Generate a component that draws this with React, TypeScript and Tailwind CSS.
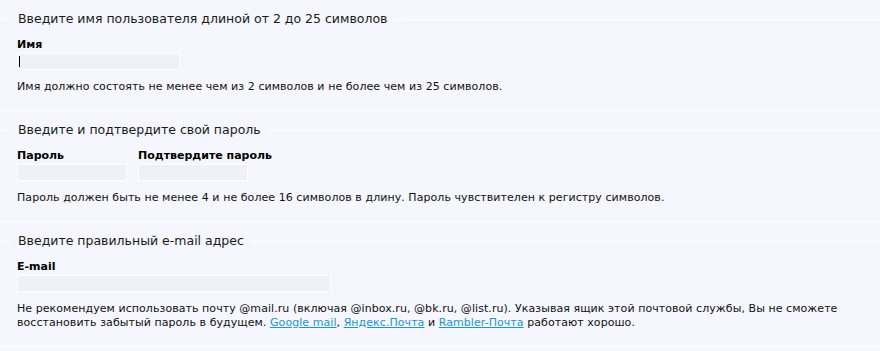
import type { ReactNode } from 'react';

function Section({ legend, children }: { legend: string; children: ReactNode }) {
  return (
    <fieldset className="border-y border-x-0 border-white px-[17px] pb-[16px]">
      <legend className="-ml-[5px] px-[6px] text-[12.5px] leading-[16px] text-[#1a1a1a]">{legend}</legend>
      <div className="pt-[11px]">{children}</div>
    </fieldset>
  );
}

function Field({ label, width, focus }: { label: string; width: string; focus?: boolean }) {
  return (
    <div className="flex flex-col">
      <label className="text-[11px] leading-[14px] font-bold text-black">{label}</label>
      <div className="relative mt-px">
        <input
          autoFocus={focus}
          className={`block h-[17px] ${width} border border-white bg-[#f0f0f8] px-px text-[11px] caret-black outline-none`}
          type="text"
        />
        {/* caret shown in the screenshot */}
        {focus && <span className="pointer-events-none absolute left-[2px] top-[3px] h-[11px] w-px bg-black" />}
      </div>
    </div>
  );
}

function Help({ children }: { children: ReactNode }) {
  return <p className="mt-[10px] text-[11px] leading-[14px] tracking-[0.06px] text-[#111]">{children}</p>;
}

export default function App() {
  return (
    <div
      className="min-h-screen bg-[#f5f6fe] pt-[11px]"
      style={{ fontFamily: '"DejaVu Sans", Verdana, sans-serif' }}
    >
      <Section legend="Введите имя пользователя длиной от 2 до 25 символов">
        <Field label="Имя" width="w-[163px]" focus />
        <Help>Имя должно состоять не менее чем из 2 символов и не более чем из 25 символов.</Help>
      </Section>

      <div className="h-[11px]" />

      <Section legend="Введите и подтвердите свой пароль">
        <div className="flex gap-[11px]">
          <Field label="Пароль" width="w-[110px]" />
          <Field label="Подтвердите пароль" width="w-[110px]" />
        </div>
        <Help>Пароль должен быть не менее 4 и не более 16 символов в длину. Пароль чувствителен к регистру символов.</Help>
      </Section>

      <div className="h-[11px]" />

      <Section legend="Введите правильный e-mail адрес">
        <Field label="E-mail" width="w-[314px]" />
        <Help>
          Не рекомендуем использовать почту @mail.ru (включая @inbox.ru, @bk.ru, @list.ru). Указывая ящик этой почтовой службы, Вы не сможете восстановить забытый пароль в будущем.{' '}
          <a href="#" className="text-[#1b96cf] underline">Google mail</a>,{' '}
          <a href="#" className="text-[#1b96cf] underline">Яндекс.Почта</a> и{' '}
          <a href="#" className="text-[#1b96cf] underline">Rambler-Почта</a> работают хорошо.
        </Help>
      </Section>
    </div>
  );
}
